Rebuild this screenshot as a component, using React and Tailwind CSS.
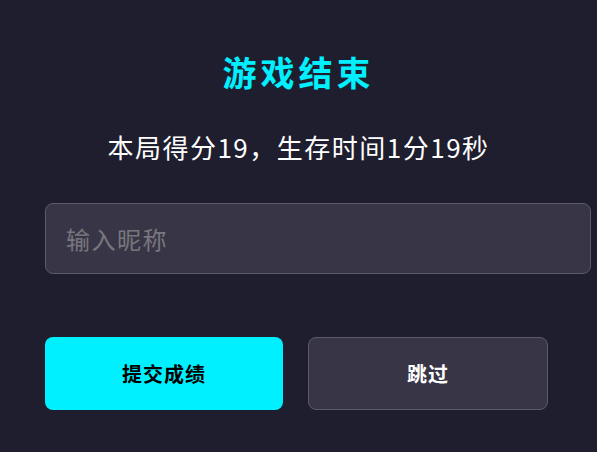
export default function App() {
  const font = { fontFamily: '"Noto Sans CJK SC", "Noto Sans", sans-serif' };
  return (
    <div className="w-[597px] h-[452px] overflow-hidden bg-[#1f1e2e] text-white" style={font}>
      <div className="pt-[50px] flex flex-col">
        <h1 className="text-center text-[34px] leading-[44px] font-bold text-[#00f0ff] tracking-[4px]">游戏结束</h1>
        <p className="mt-[37px] text-center text-[26px] leading-[32px] tracking-[1.5px]">本局得分19，生存时间1分19秒</p>
        <div className="mt-[40px] ml-[45px] w-[546px] h-[71px] rounded-[8px] border border-[#5b5a6a] bg-[#383646] flex items-center px-5">
          <input
            className="w-full bg-transparent outline-none text-[24px] tracking-[1.5px] text-white placeholder-[#78777e]"
            placeholder="输入昵称"
            style={font}
          />
        </div>
        <div className="mt-[63px] ml-[45px] flex gap-[25px]">
          <button className="w-[238px] h-[73px] rounded-[8px] bg-[#00f0ff] text-black text-[20px] tracking-[1px] font-bold" style={font}>提交成绩</button>
          <button className="w-[240px] h-[73px] rounded-[8px] border border-[#5b5a6a] bg-[#383646] text-white text-[20px] tracking-[1px] font-bold" style={font}>跳过</button>
        </div>
      </div>
    </div>
  );
}
